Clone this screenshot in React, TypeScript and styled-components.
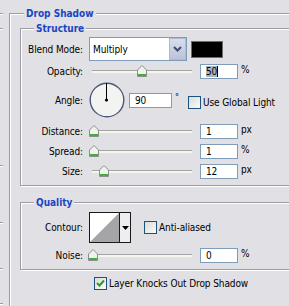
import React from "react";
import styled, { createGlobalStyle } from "styled-components";

const GlobalStyle = createGlobalStyle`
  html, body { margin: 0; padding: 0; background: #e1e0e4; }
  body {
    font-family: "DejaVu Sans Condensed", "DejaVu Sans", sans-serif;
    font-size: 10px;
    letter-spacing: -0.1px;
    color: #000;
  }
`;

const Root = styled.div`
  width: 289px;
  height: 306px;
  overflow: hidden;
  display: flex;
  align-items: flex-start;
  background: #e1e0e4;
`;

const LeftStrip = styled.div`
  width: 9px;
  flex: none;
  display: flex;
  flex-direction: column;
`;

const Dash = styled.div<{ $top: number }>`
  margin-top: ${(p) => p.$top}px;
  width: 3px;
  height: 1px;
  background: #9c9ca0;
  box-shadow: 0 1px 0 #fff;
`;

const Group = styled.div<{ $h: number; $w: number; $ml: number; $mt: number }>`
  box-sizing: border-box;
  flex: none;
  width: ${(p) => p.$w}px;
  height: ${(p) => p.$h}px;
  margin-left: ${(p) => p.$ml}px;
  margin-top: ${(p) => p.$mt}px;
  border: 1px solid #9d9ca2;
  box-shadow: inset 1px 1px 0 #fff, 1px 1px 0 #fff;
  display: flex;
  flex-direction: column;
`;

const Legend = styled.div<{ $ml: number }>`
  align-self: flex-start;
  height: 13px;
  line-height: 13px;
  margin: -7px 0 0 ${(p) => p.$ml}px;
  padding: 0 2px;
  background: #e1e0e4;
  color: #1846c4;
  font-weight: bold;
  font-size: 10px;
  letter-spacing: 0;
`;

const Row = styled.div<{ $h: number; $mt?: number }>`
  display: flex;
  align-items: center;
  height: ${(p) => p.$h}px;
  margin-top: ${(p) => p.$mt ?? 0}px;
  flex: none;
`;

const Label = styled.span`
  width: 62px;
  text-align: right;
  margin-right: 6px;
  flex: none;
  white-space: nowrap;
`;

const Select = styled.div`
  box-sizing: border-box;
  width: 98px;
  height: 24px;
  border: 1px solid #7f9db9;
  background: #fff;
  display: flex;
  align-items: center;
  padding-left: 3px;
`;

const SelectText = styled.span`
  flex: 1;
`;

const SelectButton = styled.div`
  box-sizing: border-box;
  width: 17px;
  height: 22px;
  border: 1px solid #b0b9d4;
  background: linear-gradient(#d9ddec, #bcc3da);
  display: flex;
  align-items: center;
  justify-content: center;
`;

const Swatch = styled.div`
  box-sizing: border-box;
  width: 32px;
  height: 17px;
  margin-left: 4px;
  background: #000;
  border: 1px solid #6c6c6c;
`;

const SliderWrap = styled.div`
  position: relative;
  width: 111px;
  height: 14px;
  flex: none;
`;

const Track = styled.div`
  position: absolute;
  left: 3px;
  top: 6px;
  width: 100px;
  height: 2px;
  border-top: 1px solid #a4a4a4;
  background: #f7f6ec;
`;

const Thumb = styled.svg`
  position: absolute;
  top: 1px;
`;

const Input = styled.div<{ $w: number }>`
  box-sizing: border-box;
  width: ${(p) => p.$w}px;
  height: 15px;
  border: 1px solid #7f9db9;
  background: #fff;
  padding-left: 5px;
  display: flex;
  align-items: center;
  flex: none;
`;

const Selected = styled.span`
  background: #aab3c6;
`;

const Caret = styled.span`
  display: inline-block;
  width: 1px;
  height: 11px;
  background: #000;
`;

const Unit = styled.span`
  margin-left: 3px;
  margin-top: -3px;
`;

const Degree = styled.span`
  margin-left: 3px;
  margin-top: -7px;
  font-size: 9px;
`;

const CheckLabel = styled.label<{ $ml: number; $mt?: number }>`
  display: flex;
  align-items: center;
  margin-left: ${(p) => p.$ml}px;
  margin-top: ${(p) => p.$mt ?? 0}px;
  gap: 2px;
  white-space: nowrap;
`;

const Box = styled.span`
  box-sizing: border-box;
  width: 13px;
  height: 13px;
  border: 1px solid #1c5180;
  background: linear-gradient(135deg, #dcdcd6, #fbfbf8);
  display: flex;
  align-items: center;
  justify-content: center;
  flex: none;
`;

const Dial = styled.svg`
  flex: none;
`;

const ContourBox = styled.div`
  box-sizing: border-box;
  width: 42px;
  height: 31px;
  border: 1px solid #1a1a1a;
  display: flex;
  flex: none;
`;

const ContourDrop = styled.div`
  flex: 1;
  border-left: 1px solid #1a1a1a;
  background: #eeedf0;
  display: flex;
  align-items: center;
  justify-content: center;
`;

const Slider: React.FC<{ pos: number }> = ({ pos }) => (
  <SliderWrap>
    <Track />
    <Thumb width="10" height="12" viewBox="0 0 10 12" style={{ left: pos - 5 }}>
      <path d="M5 0.5 L9.5 5 V11.5 H0.5 V5 Z" fill="#f1f1ee" stroke="#8e8e8e" />
      <rect x="1" y="9" width="8" height="2" fill="#3fae3f" />
    </Thumb>
  </SliderWrap>
);

const Check: React.FC<{ checked?: boolean }> = ({ checked }) => (
  <Box>
    {checked && (
      <svg width="9" height="9" viewBox="0 0 9 9">
        <path d="M1 4 L3.5 6.5 L8 1.5" fill="none" stroke="#21a121" strokeWidth="2" />
      </svg>
    )}
  </Box>
);

export default function App() {
  return (
    <>
      <GlobalStyle />
      <Root>
        <LeftStrip>
          <Dash $top={13} />
          <Dash $top={14} />
          <Dash $top={136} />
          <Dash $top={56} />
          <Dash $top={45} />
          <Dash $top={34} />
        </LeftStrip>
        <Group $w={320} $h={330} $ml={0} $mt={13}>
          <Legend $ml={14}>Drop Shadow</Legend>
          <Group $w={300} $h={158} $ml={10} $mt={8}>
            <Legend $ml={13}>Structure</Legend>
            <Row $h={24} $mt={2}>
              <Label>Blend Mode:</Label>
              <Select>
                <SelectText>Multiply</SelectText>
                <SelectButton>
                  <svg width="9" height="6" viewBox="0 0 9 6">
                    <path d="M1 1 L4.5 4.5 L8 1" fill="none" stroke="#3c4b6e" strokeWidth="2" />
                  </svg>
                </SelectButton>
              </Select>
              <Swatch />
            </Row>
            <Row $h={20}>
              <Label>Opacity:</Label>
              <Slider pos={53} />
              <Input $w={38}>
                <Selected>50</Selected>
                <Caret />
              </Input>
              <Unit>%</Unit>
            </Row>
            <Row $h={38}>
              <Label>Angle:</Label>
              <Dial width="36" height="36" viewBox="0 0 36 36">
                <circle cx="18" cy="18" r="16.8" fill="#f3f3f2" stroke="#4a5878" strokeWidth="1.4" />
                <line x1="17.5" y1="18" x2="17.5" y2="1" stroke="#000" strokeWidth="1" />
                <circle cx="17.5" cy="18" r="1.6" fill="#000" />
              </Dial>
              <Input $w={43} style={{ marginLeft: 4 }}>90</Input>
              <Degree>°</Degree>
              <CheckLabel $ml={9} $mt={4}>
                <Check />
                Use Global Light
              </CheckLabel>
            </Row>
            <Row $h={20} $mt={2}>
              <Label>Distance:</Label>
              <Slider pos={5} />
              <Input $w={38}>1</Input>
              <Unit>px</Unit>
            </Row>
            <Row $h={20}>
              <Label>Spread:</Label>
              <Slider pos={5} />
              <Input $w={38}>1</Input>
              <Unit>%</Unit>
            </Row>
            <Row $h={20}>
              <Label>Size:</Label>
              <Slider pos={15} />
              <Input $w={38}>12</Input>
              <Unit>px</Unit>
            </Row>
          </Group>
          <Group $w={300} $h={68} $ml={10} $mt={16}>
            <Legend $ml={13}>Quality</Legend>
            <Row $h={31} $mt={3}>
              <Label>Contour:</Label>
              <ContourBox>
                <svg width="29" height="29" viewBox="0 0 29 29">
                  <rect width="29" height="29" fill="#fff" />
                  <polygon points="0,29 29,0 29,29" fill="#a5a5a8" />
                </svg>
                <ContourDrop>
                  <svg width="7" height="4" viewBox="0 0 7 4">
                    <polygon points="0,0 7,0 3.5,4" fill="#000" />
                  </svg>
                </ContourDrop>
              </ContourBox>
              <CheckLabel $ml={13}>
                <Check />
                Anti-aliased
              </CheckLabel>
            </Row>
            <Row $h={20} $mt={2}>
              <Label>Noise:</Label>
              <Slider pos={4} />
              <Input $w={38}>0</Input>
              <Unit>%</Unit>
            </Row>
          </Group>
          <CheckLabel $ml={84} $mt={7}>
            <Check checked />
            Layer Knocks Out Drop Shadow
          </CheckLabel>
        </Group>
      </Root>
    </>
  );
}
